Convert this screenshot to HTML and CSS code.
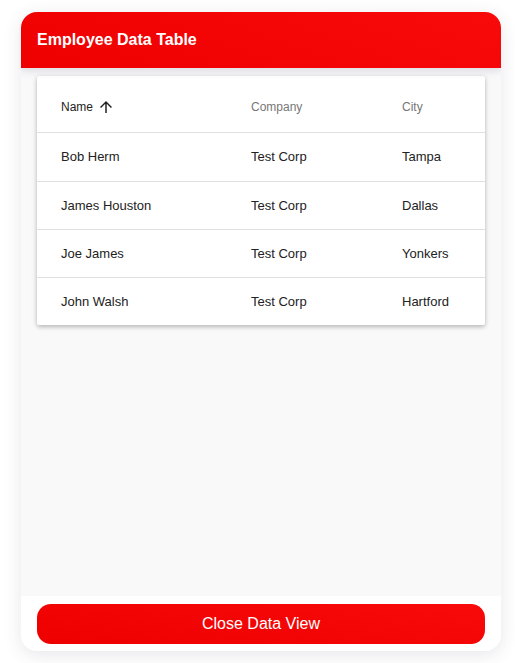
FILE: index.html
```html
<!DOCTYPE html>
<html>
<head>
<meta charset="utf-8">
<link rel="stylesheet" href="styles.css">
</head>
<body>
<div class="card">
  <div class="card-header">Employee Data Table</div>
  <div class="card-body">
    <div class="table-wrap">
      <table class="data-table">
        <colgroup>
          <col class="c-name">
          <col class="c-company">
          <col class="c-city">
        </colgroup>
        <thead>
          <tr>
            <th class="col-name sorted">Name <svg class="sort-icon" viewBox="0 0 24 24" width="18" height="18"><path d="M4 12l1.41 1.41L11 7.83V20h2V7.83l5.58 5.59L20 12l-8-8-8 8z" fill="currentColor"/></svg></th>
            <th class="col-company">Company</th>
            <th class="col-city">City</th>
          </tr>
        </thead>
        <tbody>
          <tr class="first-row"><td>Bob Herm</td><td>Test Corp</td><td>Tampa</td></tr>
          <tr><td>James Houston</td><td>Test Corp</td><td>Dallas</td></tr>
          <tr><td>Joe James</td><td>Test Corp</td><td>Yonkers</td></tr>
          <tr><td>John Walsh</td><td>Test Corp</td><td>Hartford</td></tr>
        </tbody>
      </table>
    </div>
  </div>
  <div class="card-footer">
    <button class="close-btn">Close Data View</button>
  </div>
</div>
</body>
</html>
```

FILE: styles.css
```css
html, body {
  margin: 0;
  padding: 0;
  background: #ffffff;
}
body {
  font-family: "Liberation Sans", Arial, sans-serif;
  padding: 12px 14px 12px 21px;
  box-sizing: border-box;
  width: 515px;
  height: 663px;
}
.card {
  width: 480px;
  height: 639px;
  border-radius: 16px;
  background: #ffffff;
  box-shadow: 0 4px 18px rgba(60, 60, 90, 0.12);
  display: flex;
  flex-direction: column;
  overflow: hidden;
}
.card-header {
  height: 56px;
  flex: 0 0 56px;
  background: linear-gradient(20deg, #ee0000, #f80a0a);
  color: #ffffff;
  font-weight: bold;
  font-size: 16px;
  display: flex;
  align-items: center;
  padding-left: 16px;
  position: relative;
  z-index: 1;
  box-shadow: 0 3px 8px rgba(90, 90, 120, 0.18);
}
.card-body {
  flex: 1;
  background: #f9f9fa;
  padding: 8px 16px;
}
.table-wrap {
  background: #ffffff;
  border-radius: 2px;
  box-shadow: 0 2px 4px rgba(0,0,0,0.2), 0 1px 6px rgba(0,0,0,0.1);
}
.data-table {
  width: 100%;
  table-layout: fixed;
  border-collapse: collapse;
  font-size: 13px;
  color: #222222;
}
.c-name { width: 214px; }
.c-company { width: 151px; }
.c-city { width: auto; }
.data-table th {
  height: 56px;
  text-align: left;
  font-weight: normal;
  font-size: 12px;
  color: #777777;
  border-bottom: 1px solid #e0e0e0;
  padding: 7px 0 0 0;
  box-sizing: border-box;
}
.data-table th.sorted {
  color: #222222;
}
.sort-icon {
  vertical-align: middle;
  margin: -5px 0 -4px 1px;
  position: relative;
  top: -1px;
  color: #222222;
}
.data-table td {
  height: 48px;
  padding: 0;
  border-bottom: 1px solid #e0e0e0;
  box-sizing: border-box;
}
.data-table .first-row td {
  height: 49px;
}
.data-table tbody tr:last-child td {
  border-bottom: none;
}
.data-table th:first-child,
.data-table td:first-child {
  padding-left: 24px;
}
.card-footer {
  flex: 0 0 55px;
  background: #ffffff;
  padding: 8px 16px 7px;
  box-sizing: border-box;
}
.close-btn {
  width: 100%;
  height: 40px;
  border: none;
  border-radius: 14px;
  background: linear-gradient(10deg, #ee0000, #f80a0a);
  color: #ffffff;
  font-family: "Liberation Sans", Arial, sans-serif;
  font-size: 16px;
  cursor: pointer;
}
```
